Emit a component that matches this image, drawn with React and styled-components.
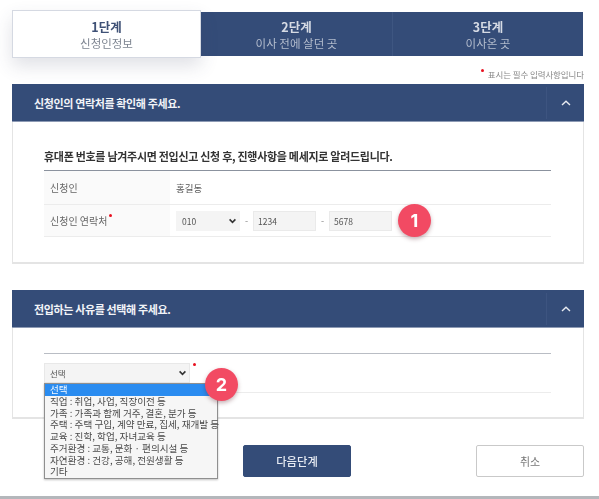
import React from "react";
import styled, { createGlobalStyle } from "styled-components";

const navy = "#344c78";
const FONT = `"Noto Sans CJK KR", "Noto Sans", sans-serif`;

const Global = createGlobalStyle`
  html, body { margin: 0; padding: 0; background: #fff; }
  body { font-family: ${FONT}; color: #333; }
  * { box-sizing: border-box; }
`;

const Page = styled.div`
  width: 599px;
  height: 499px;
  overflow: hidden;
  padding: 10px 15px 0 12px;
  border-bottom: 3px solid #b4b7bb;
  filter: blur(0.45px);
`;

const Steps = styled.div`
  display: grid;
  grid-template-columns: 189px 191px 191px;
  height: 48px;
  align-items: center;
`;

const Step = styled.div`
  height: ${(p) => (p.$active ? "48px" : "44px")};
  background: ${(p) => (p.$active ? "#fff" : navy)};
  border: ${(p) => (p.$active ? "1px solid #d5d9e2" : "none")};
  border-left: ${(p) => (p.$divider ? "1px solid #3e5681" : undefined)};
  box-shadow: ${(p) => (p.$active ? "0 8px 18px rgba(60,70,100,.16)" : "none")};
  color: ${(p) => (p.$active ? "#3f5176" : "#d5dae4")};
  position: relative;
  z-index: ${(p) => (p.$active ? 1 : 0)};
  display: flex;
  flex-direction: column;
  align-items: center;
  justify-content: center;
`;

const StepNum = styled.strong`
  font-size: 12.5px;
  line-height: 17px;
  font-weight: 700;
`;

const StepName = styled.span`
  font-size: 11.5px;
  line-height: 16px;
  color: ${(p) => (p.$active ? "#7d8490" : "#b3bccd")};
`;

const Note = styled.div`
  height: 26px;
  padding-top: 10px;
  text-align: right;
  font-size: 8.5px;
  line-height: 12px;
  letter-spacing: -0.1px;
  color: #888;
  white-space: nowrap;
`;

const NoteDot = styled.i`
  display: inline-block;
  width: 3px;
  height: 3px;
  border-radius: 50%;
  background: #e8101f;
  vertical-align: 6px;
  margin-right: 4px;
`;

const LabelDot = styled.i`
  width: 3px;
  height: 3px;
  border-radius: 50%;
  background: #e8101f;
  margin: -11px 0 0 2px;
`;

const Section = styled.section`
  position: relative;
  width: 572px;
  margin-bottom: ${(p) => p.$gap || 0}px;
`;

const SectionHead = styled.header`
  height: 38px;
  background: ${navy};
  border-bottom: 1px solid #8d9ab4;
  padding: 0 0 0 22px;
  display: flex;
  align-items: center;
  justify-content: space-between;
`;

const SectionTitle = styled.h2`
  margin: 0;
  font-size: 11px;
  font-weight: 700;
  letter-spacing: -0.37px;
  color: #f2f4f8;
`;

const Toggle = styled.div`
  width: 38px;
  height: 32px;
  border-left: 1px solid #3d5480;
  display: flex;
  align-items: center;
  justify-content: center;
  color: #e8ebf1;
`;

const SectionBody = styled.div`
  height: ${(p) => p.$h}px;
  border: 1px solid #e4e4e4;
  border-top: none;
  border-bottom-width: 2px;
  padding: ${(p) => p.$pad}px 32px 0 31px;
`;

const Lead = styled.p`
  margin: 0 0 7px;
  font-size: 11px;
  line-height: 14px;
  font-weight: 700;
  letter-spacing: -0.29px;
  color: #333;
  white-space: nowrap;
`;

const Table = styled.div`
  border-top: 1px solid ${(p) => p.$rule || "#8b929e"};
`;

const Row = styled.div`
  display: grid;
  grid-template-columns: 126px 1fr;
  height: ${(p) => p.$h}px;
  border-bottom: 1px solid #ececec;
  font-size: 9.5px;
  color: #555;
`;

const ReasonRow = styled.div`
  height: 39px;
  padding-top: 9px;
  border-bottom: 1px solid #ececec;
`;

const Label = styled.div`
  background: #fafafa;
  padding-left: 6px;
  display: flex;
  align-items: center;
  font-size: 10px;
  color: #666;
`;

const Value = styled.div`
  display: flex;
  align-items: center;
  padding-left: 6px;
`;

const Sep = styled.span`
  width: 13px;
  text-align: center;
  font-size: 9px;
  color: #888;
`;

const SelectShell = styled.div`
  position: relative;
  width: ${(p) => p.$w}px;
  height: 20px;
`;

const NativeSelect = styled.select`
  appearance: none;
  display: block;
  width: 100%;
  height: 20px;
  border: ${(p) => (p.$bordered ? "1px solid #e8e8e8" : "none")};
  background: #f4f4f4;
  font: 8.5px ${FONT};
  color: #555;
  padding-left: ${(p) => (p.$bordered ? "5px" : "6px")};
`;

const Arrow = styled.svg`
  position: absolute;
  right: 4px;
  top: 7px;
  width: 7px;
  height: 6px;
  color: #333;
  pointer-events: none;
`;

const PhoneInput = styled.input`
  width: 63px;
  height: 20px;
  border: 1px solid #eaeaea;
  background: #f4f4f4;
  font: 8.5px ${FONT};
  color: #555;
  padding: 0 4px;
`;

const RequiredDot = styled.i`
  position: absolute;
  left: 149px;
  top: 0;
  width: 3px;
  height: 3px;
  border-radius: 50%;
  background: #e8101f;
`;

const ListBox = styled.ul`
  position: absolute;
  left: 0;
  top: 20px;
  z-index: 3;
  width: 174px;
  height: 96px;
  margin: 0;
  padding: 0;
  list-style: none;
  background: #f6f6f6;
  border: 1px solid #8f8f8f;
  box-shadow: 0 1px 2px rgba(0, 0, 0, .25);
`;

const Option = styled.li`
  height: 11.75px;
  line-height: 11.75px;
  padding-left: 5px;
  font-size: 9.6px;
  white-space: nowrap;
  color: ${(p) => (p.$selected ? "#f4f9ff" : "#4a4a4a")};
  background: ${(p) => (p.$selected ? "#2a8cf0" : "transparent")};
`;

const Badge = styled.div`
  position: absolute;
  z-index: 4;
  left: ${(p) => p.$x}px;
  top: ${(p) => p.$y}px;
  width: 33px;
  height: 33px;
  border-radius: 50%;
  background: #f24a63;
  color: #fff;
  font: 700 18px/33px "Inter", sans-serif;
  text-align: center;
  box-shadow: 0 2px 4px rgba(90, 30, 40, .35);
`;

const Actions = styled.div`
  display: flex;
  justify-content: space-between;
  padding-left: 231px;
  margin-top: 26px;
`;

const Button = styled.button`
  width: 108px;
  height: 32px;
  border-radius: 2px;
  font: ${(p) => (p.$primary ? 500 : 400)} ${(p) => (p.$primary ? 11.3 : 11)}px ${FONT};
  color: ${(p) => (p.$primary ? "#e6eaf2" : "#777")};
  background: ${(p) => (p.$primary ? navy : "#fff")};
  border: 1px solid ${(p) => (p.$primary ? navy : "#c9c9c9")};
  padding: 0;
`;

const Chevron = () => (
  <svg width="12" height="12" viewBox="0 0 12 12" fill="none" stroke="currentColor" strokeWidth="1.4">
    <path d="M2 8 L6 4.2 L10 8" />
  </svg>
);

const SelectArrow = () => (
  <Arrow viewBox="0 0 7 6" fill="none" stroke="currentColor" strokeWidth="1.6">
    <path d="M.6 1.4 L3.5 4.3 L6.4 1.4" />
  </Arrow>
);

const reasons = [
  "선택",
  "직업 : 취업, 사업, 직장이전 등",
  "가족 : 가족과 함께 거주, 결혼, 분가 등",
  "주택 : 주택 구입, 계약 만료, 집세, 재개발 등",
  "교육 : 진학, 학업, 자녀교육 등",
  "주거환경 : 교통, 문화 · 편의시설 등",
  "자연환경 : 건강, 공해, 전원생활 등",
  "기타",
];

export default function App() {
  return (
    <>
      <Global />
      <Page>
        <Steps>
          <Step $active>
            <StepNum>1단계</StepNum>
            <StepName $active>신청인정보</StepName>
          </Step>
          <Step>
            <StepNum>2단계</StepNum>
            <StepName>이사 전에 살던 곳</StepName>
          </Step>
          <Step $divider>
            <StepNum>3단계</StepNum>
            <StepName>이사온 곳</StepName>
          </Step>
        </Steps>
        <Note>
          <NoteDot />
          표시는 필수 입력사항입니다
        </Note>

        <Section $gap={26}>
          <SectionHead>
            <SectionTitle>신청인의 연락처를 확인해 주세요.</SectionTitle>
            <Toggle><Chevron /></Toggle>
          </SectionHead>
          <SectionBody $h={142} $pad={27}>
            <Lead>휴대폰 번호를 남겨주시면 전입신고 신청 후, 진행사항을 메세지로 알려드립니다.</Lead>
            <Table>
              <Row $h={34}>
                <Label>신청인</Label>
                <Value>홍길동</Value>
              </Row>
              <Row $h={32}>
                <Label>
                  신청인 연락처
                  <LabelDot />
                </Label>
                <Value>
                  <SelectShell $w={64}>
                    <NativeSelect defaultValue="010"><option>010</option></NativeSelect>
                    <SelectArrow />
                  </SelectShell>
                  <Sep>-</Sep>
                  <PhoneInput defaultValue="1234" />
                  <Sep>-</Sep>
                  <PhoneInput defaultValue="5678" />
                </Value>
              </Row>
            </Table>
          </SectionBody>
          <Badge $x={386} $y={120}>1</Badge>
        </Section>

        <Section>
          <SectionHead>
            <SectionTitle>전입하는 사유를 선택해 주세요.</SectionTitle>
            <Toggle><Chevron /></Toggle>
          </SectionHead>
          <SectionBody $h={91} $pad={25}>
            <Table $rule="#b9bdc4">
              <ReasonRow>
                <SelectShell $w={146}>
                  <NativeSelect $bordered><option>선택</option></NativeSelect>
                  <SelectArrow />
                  <RequiredDot />
                  <ListBox>
                    {reasons.map((r, i) => (
                      <Option key={r} $selected={i === 0}>{r}</Option>
                    ))}
                  </ListBox>
                </SelectShell>
              </ReasonRow>
            </Table>
          </SectionBody>
          <Badge $x={193} $y={78}>2</Badge>
        </Section>

        <Actions>
          <Button $primary>다음단계</Button>
          <Button>취소</Button>
        </Actions>
      </Page>
    </>
  );
}
